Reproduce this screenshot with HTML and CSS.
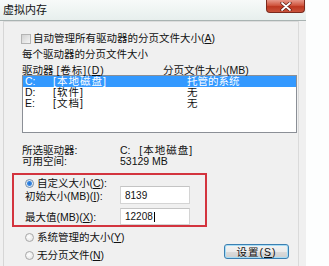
FILE: index.html
```html
<!DOCTYPE html>
<html lang="zh-CN">

<head>
    <meta charset="UTF-8">
    <title>虚拟内存</title>
    <link rel="stylesheet" href="styles.css">
</head>

<body>
    <div class="window">
        <div class="titlebar">
            <span class="title">虚拟内存</span>
            <span class="close">
                <svg width="12" height="9" viewBox="0 0 12 9">
                    <path d="M2 1 L10 8 M10 1 L2 8" stroke="#5a1a10" stroke-width="3.2" stroke-linecap="round" />
                    <path d="M2 1 L10 8 M10 1 L2 8" stroke="#ffffff" stroke-width="1.8" stroke-linecap="round" />
                </svg>
            </span>
        </div>

        <div class="client">
            <div class="check-row">
                <span class="checkbox"></span>
                <span>自动管理所有驱动器的分页文件大小(<u>A</u>)</span>
            </div>
            <div class="caption">每个驱动器的分页文件大小</div>
            <div class="header">
                <span>驱动器 <span class="wide">[卷标](<u>D</u>)</span></span>
                <span>分页文件大小(MB)</span>
            </div>
            <div class="list">
                <div class="list-row selected">
                    <span>C:</span><span class="wide">[本地磁盘]</span><span>托管的系统</span>
                </div>
                <div class="list-row">
                    <span>D:</span><span class="wide">[软件]</span><span>无</span>
                </div>
                <div class="list-row">
                    <span>E:</span><span class="wide">[文档]</span><span>无</span>
                </div>
            </div>

            <div class="info">
                <div class="info-row"><span>所选驱动器:</span><span>C:&nbsp;&nbsp;&nbsp;<span class="wide">[本地磁盘]</span></span></div>
                <div class="info-row"><span>可用空间:</span><span>53129 MB</span></div>
            </div>

            <div class="redbox">
                <div class="radio-row">
                    <span class="radio checked"></span>
                    <span>自定义大小(<u>C</u>):</span>
                </div>
                <div class="field first">
                    <span>初始大小(MB)(<u>I</u>):</span>
                    <span class="input">8139</span>
                </div>
                <div class="field second">
                    <span>最大值(MB)(<u>X</u>):</span>
                    <span class="input">12208<span class="caret"></span></span>
                </div>
            </div>

            <div class="radio-row plain">
                <span class="radio"></span>
                <span>系统管理的大小(<u>Y</u>)</span>
            </div>
            <div class="bottom">
                <div class="radio-row">
                    <span class="radio"></span>
                    <span>无分页文件(<u>N</u>)</span>
                </div>
                <button class="btn">设置(<u>S</u>)</button>
            </div>
        </div>
    </div>
</body>

</html>
```

FILE: styles.css
```css
* {
    margin: 0;
    padding: 0;
    box-sizing: border-box;
}

body {
    width: 329px;
    height: 266px;
    overflow: hidden;
    background-color: #fdfefe;
    font-family: "Liberation Sans", "Noto Sans CJK SC", sans-serif;
    font-size: 10.5px;
    color: #111;
}

u {
    text-decoration: underline;
    text-underline-offset: 1px;
}

.wide {
    letter-spacing: 1px;
}

.window {
    width: 306px;
    height: 266px;
    background-color: #f0f0f0;
}

.titlebar {
    height: 21px;
    display: flex;
    justify-content: space-between;
    align-items: flex-start;
    padding-left: 3px;
    background: linear-gradient(#f7faf9, #e7efed);
    border-bottom: 1px solid #a9b3b2;
}

.title {
    font-size: 11px;
    line-height: 11px;
    margin-top: 5px;
}

.close {
    width: 39px;
    height: 13px;
    margin-right: 1px;
    display: flex;
    justify-content: center;
    align-items: center;
    background: linear-gradient(#e7988a, #d0563f 45%, #bd3720 55%, #c9533b);
    border: 1px solid #7b2a1d;
    border-top: none;
    border-radius: 0 0 4px 4px;
}

.client {
    width: 296px;
    height: 245px;
    margin-left: 3px;
    padding-left: 18px;
    border-left: 1px solid #d6d6d6;
    border-top: 1px solid #dcdcdc;
    border-right: 1px solid #dadada;
}

.check-row {
    margin-top: 11px;
    height: 11px;
    line-height: 11px;
    display: flex;
    align-items: center;
    gap: 2px;
}

.checkbox {
    width: 10px;
    height: 10px;
    margin-left: -1px;
    border: 1px solid #b4b4b4;
    background: linear-gradient(135deg, #d2d2d2, #f4f4f4);
}

.caption {
    margin-top: 5px;
    height: 11px;
    line-height: 11px;
}

.header {
    margin-top: 5px;
    height: 10px;
    line-height: 10px;
    display: grid;
    grid-template-columns: 141px auto;
}

.list {
    width: 275px;
    height: 58px;
    background-color: #fff;
    border: 1px solid #8b8f96;
}

.list-row {
    height: 11px;
    line-height: 11px;
    padding-left: 2px;
    display: grid;
    grid-template-columns: 28px 134px auto;
}

.list-row.selected {
    background-color: #3399ff;
    color: #fff;
}

.info {
    margin-top: 12px;
}

.info-row {
    height: 11px;
    line-height: 11px;
    display: grid;
    grid-template-columns: 98px auto;
}

.redbox {
    width: 195px;
    margin-top: 6px;
    margin-left: -10px;
    padding: 3px 0 0 11px;
    border: 2px solid #d3343e;
}

.radio-row {
    height: 11px;
    line-height: 11px;
    display: flex;
    align-items: center;
    gap: 3px;
}

.radio {
    width: 9px;
    height: 9px;
    border-radius: 50%;
    border: 1px solid #a8a8a8;
    background: radial-gradient(circle at 40% 40%, #ffffff, #dedede);
}

.radio.checked {
    border-color: #6f8aa6;
    background: radial-gradient(circle, #1e6fd0 0, #3b8ae6 2px, #e4eaf0 3px, #ffffff 4px);
}

.field {
    display: grid;
    grid-template-columns: 95px 70px;
    align-items: center;
}

.field.first {
    margin-top: -3px;
}

.field.first .input {
    height: 18px;
}

.field.second {
    margin-top: 4px;
}

.field.second .input {
    height: 17px;
}

.input {
    display: flex;
    align-items: center;
    padding-left: 4px;
    font-size: 10px;
    background-color: #fff;
    border: 1px solid #d4d4d4;
    border-top-color: #c4c4c4;
}

.caret {
    width: 1px;
    height: 10px;
    margin-left: 1px;
    background-color: #000;
}

.plain {
    margin-top: 5px;
    margin-left: 3px;
}

.bottom {
    width: 264px;
    margin-top: 7px;
    margin-left: 3px;
    display: flex;
    justify-content: space-between;
    align-items: flex-start;
}

.btn {
    flex-shrink: 0;
    width: 65px;
    height: 15px;
    margin-top: -6px;
    font-family: inherit;
    font-size: 10.5px;
    line-height: 12px;
    letter-spacing: 1px;
    color: #111;
    border: 1px solid #3c7fb1;
    border-radius: 3px;
    background: linear-gradient(#f3f3f3, #ebebeb 50%, #dcdcdc 50%, #cfcfcf);
    box-shadow: inset 0 0 0 1px #a6ddf6;
}
```
